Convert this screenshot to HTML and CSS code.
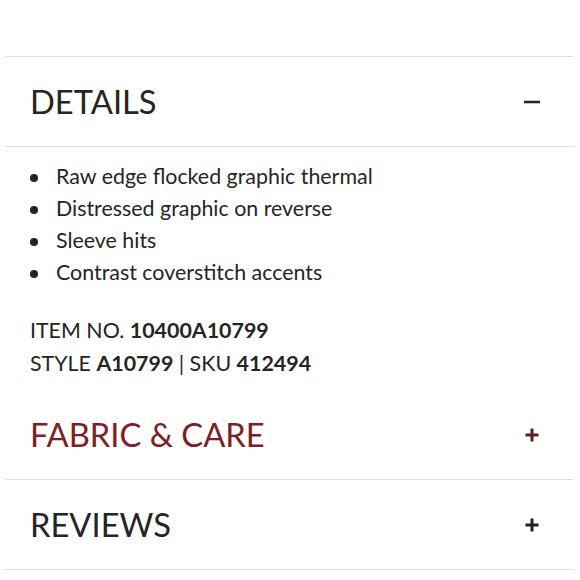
FILE: index.html
```html
<!DOCTYPE html>
<html lang="en">
<head>
<meta charset="utf-8">
<link rel="stylesheet" href="styles.css">
</head>
<body>
<div class="accordion">
  <section class="panel panel-first panel-open">
    <div class="panel-head">
      <h2 class="panel-title">DETAILS</h2>
      <svg class="icon" width="16" height="16" viewBox="0 0 16 16"><rect x="0" y="6.75" width="16" height="2.5" fill="#222"/></svg>
    </div>
    <div class="panel-body">
      <ul class="features">
        <li>Raw edge flocked graphic thermal</li>
        <li>Distressed graphic on reverse</li>
        <li>Sleeve hits</li>
        <li>Contrast coverstitch accents</li>
      </ul>
      <p class="meta">ITEM NO. <b>10400A10799</b><br>STYLE <b>A10799</b> | SKU <b>412494</b></p>
    </div>
  </section>
  <section class="panel panel-active">
    <div class="panel-head">
      <h2 class="panel-title">FABRIC &amp; CARE</h2>
      <svg class="icon" width="16" height="16" viewBox="0 0 16 16"><rect x="1.5" y="6.5" width="13" height="3" fill="#661c1e"/><rect x="6.5" y="1.5" width="3" height="13" fill="#661c1e"/></svg>
    </div>
  </section>
  <section class="panel">
    <div class="panel-head">
      <h2 class="panel-title">REVIEWS</h2>
      <svg class="icon" width="16" height="16" viewBox="0 0 16 16"><rect x="1.5" y="6.5" width="13" height="3" fill="#222"/><rect x="6.5" y="1.5" width="3" height="13" fill="#222"/></svg>
    </div>
  </section>
</div>
</body>
</html>
```
FILE: styles.css
```css
html, body {
  margin: 0;
  padding: 0;
  background: #fff;
}
body {
  font-family: Lato, "Open Sans", sans-serif;
  color: #252525;
}
.accordion {
  padding-top: 56px;
  margin: 0 6px 0 5px;
}
.panel {
  border-bottom: 1px solid #dedede;
}
.panel-open {
  border-bottom: none;
}
.panel-first {
  border-top: 1px solid #dedede;
}
.panel-head {
  height: 89px;
  display: flex;
  align-items: center;
  justify-content: space-between;
  padding: 0 34px 0 25px;
}
.panel-open .panel-head {
  border-bottom: 1px solid #dedede;
}
.panel-title {
  margin: 0;
  font-size: 32.7px;
  font-weight: 400;
  line-height: normal;
  color: #252525;
}
.panel-active .panel-title {
  color: #7c2226;
}
.icon {
  display: block;
  margin-top: 1px;
}
.panel-body {
  padding: 13px 25px 10px 25px;
}
.features {
  list-style: none;
  margin: 0;
  padding: 0;
  font-size: 21.4px;
  line-height: 32px;
}
.features li {
  position: relative;
  padding-left: 26px;
}
.features li::before {
  content: "";
  position: absolute;
  left: 0;
  top: 14px;
  width: 8px;
  height: 8px;
  border-radius: 50%;
  background: #222;
}
.meta {
  margin: 26px 0 0 0;
  font-size: 21.4px;
  line-height: 33px;
}
.meta b {
  font-weight: 700;
}
```
